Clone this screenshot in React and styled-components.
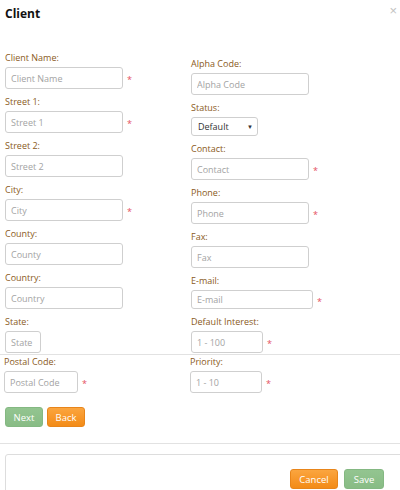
import React from 'react'
import styled, { createGlobalStyle } from 'styled-components'

const GlobalStyle = createGlobalStyle`
    html, body {
        margin: 0;
        padding: 0;
        background: #ffffff;
        overflow: hidden;
    }
    body {
        font-family: "Open Sans", "Liberation Sans", sans-serif;
    }
`

const leftFields = [
    { label: 'Client Name:', ph: 'Client Name', req: true },
    { label: 'Street 1:', ph: 'Street 1', req: true },
    { label: 'Street 2:', ph: 'Street 2' },
    { label: 'City:', ph: 'City', req: true },
    { label: 'County:', ph: 'County' },
    { label: 'Country:', ph: 'Country' },
    { label: 'State:', ph: 'State', w: 36 },
]

const rightFields = [
    { label: 'Alpha Code:', ph: 'Alpha Code' },
    { label: 'Status:', select: true },
    { label: 'Contact:', ph: 'Contact', req: true },
    { label: 'Phone:', ph: 'Phone', req: true },
    { label: 'Fax:', ph: 'Fax' },
    { label: 'E-mail:', ph: 'E-mail', req: true, w: 122, h: 19 },
    { label: 'Default Interest:', ph: '1 - 100', req: true, w: 72 },
]

function FormField({ field }) {
    return (
        <Field>
            <Label>{field.label}</Label>
            <InputRow>
                {field.select ? (
                    <Select>
                        <span>Default</span>
                        <Caret>▼</Caret>
                    </Select>
                ) : (
                    <TextInput placeholder={field.ph} $w={field.w} $h={field.h} />
                )}
                {field.req && <Required>*</Required>}
            </InputRow>
        </Field>
    )
}

function App() {
    return (
        <>
            <GlobalStyle />
            <Modal>
                <Header>
                    <Title>Client</Title>
                    <Close>×</Close>
                </Header>
                <Body>
                    <Column>
                        {leftFields.map((f) => <FormField key={f.label} field={f} />)}
                    </Column>
                    <Column $offset>
                        {rightFields.map((f) => <FormField key={f.label} field={f} />)}
                    </Column>
                </Body>
                <Second>
                    <Column>
                        <FormField field={{ label: 'Postal Code:', ph: 'Postal Code', req: true, w: 74 }} />
                    </Column>
                    <Column>
                        <FormField field={{ label: 'Priority:', ph: '1 - 10', req: true, w: 72 }} />
                    </Column>
                </Second>
                <Actions>
                    <Button $kind="green">Next</Button>
                    <Button $kind="orange">Back</Button>
                </Actions>
                <Footer>
                    <Button $kind="orange" $w={48}>Cancel</Button>
                    <Button $kind="green" $w={40}>Save</Button>
                </Footer>
            </Modal>
        </>
    )
}

const Modal = styled.div`
    width: 400px;
    height: 490px;
    overflow: hidden;
`

const Header = styled.div`
    display: flex;
    justify-content: space-between;
    align-items: flex-start;
    padding: 5px 3px 0 5px;
    height: 23px;
    box-sizing: border-box;
`

const Title = styled.h1`
    margin: 0;
    font-size: 12px;
    line-height: 18px;
    font-weight: 700;
    color: #111111;
`

const Close = styled.span`
    font-family: "Liberation Sans", sans-serif;
    font-size: 13px;
    line-height: 11px;
    color: #c2c2c2;
`

const Body = styled.div`
    display: grid;
    grid-template-columns: 186px 186px;
    padding: 28px 0 1px 5px;
    border-bottom: 1px solid #e2e2e2;
`

const Second = styled.div`
    display: grid;
    grid-template-columns: 186px 186px;
    padding-left: 4px;
`

const Column = styled.div`
    display: flex;
    flex-direction: column;
    gap: 6px;
    padding-top: ${(p) => (p.$offset ? '6px' : '0')};
`

const Field = styled.div`
    display: flex;
    flex-direction: column;
    gap: 2px;
`

const Label = styled.label`
    font-size: 9px;
    line-height: 14px;
    color: #8a5a22;
`

const InputRow = styled.div`
    display: flex;
    align-items: center;
    gap: 4px;
`

const TextInput = styled.input`
    box-sizing: border-box;
    width: ${(p) => p.$w || 118}px;
    height: ${(p) => p.$h || 22}px;
    padding: 0 5px;
    border: 1px solid #cfcfcf;
    border-radius: 3px;
    font-family: "Open Sans", "Liberation Sans", sans-serif;
    font-size: 9px;
    color: #333333;
    outline: none;

    &::placeholder {
        color: #a3a3a3;
    }
`

const Select = styled.div`
    box-sizing: border-box;
    width: 67px;
    height: 19px;
    padding: 0 4px 0 6px;
    display: flex;
    align-items: center;
    justify-content: space-between;
    border: 1px solid #cfcfcf;
    border-radius: 3px;
    font-size: 9px;
    color: #333333;
`

const Caret = styled.span`
    font-size: 6px;
    color: #333333;
`

const Required = styled.span`
    font-size: 9px;
    line-height: 9px;
    color: #e4505c;
    padding-top: 3px;
`

const Actions = styled.div`
    display: flex;
    gap: 4px;
    padding: 14px 0 16px 5px;
    border-bottom: 1px solid #e2e2e2;
`

const Button = styled.button`
    box-sizing: border-box;
    height: 20px;
    width: ${(p) => (p.$w ? `${p.$w}px` : 'auto')};
    min-width: 38px;
    padding: 0 7px;
    border-radius: 3px;
    font-family: "Open Sans", "Liberation Sans", sans-serif;
    font-size: 9.5px;
    color: #ffffff;
    cursor: pointer;
    border: 1px solid ${(p) => (p.$kind === 'green' ? '#84b882' : '#e8851a')};
    background: ${(p) => (p.$kind === 'green'
        ? 'linear-gradient(#93c590, #88bc85)'
        : 'linear-gradient(#fba53f, #f38b17)')};
`

const Footer = styled.div`
    display: flex;
    justify-content: flex-end;
    gap: 6px;
    margin: 10px -20px 0 5px;
    padding: 14px 35px 0 0;
    height: 60px;
    border: 1px solid #dddddd;
    border-radius: 3px;
`

export default App
